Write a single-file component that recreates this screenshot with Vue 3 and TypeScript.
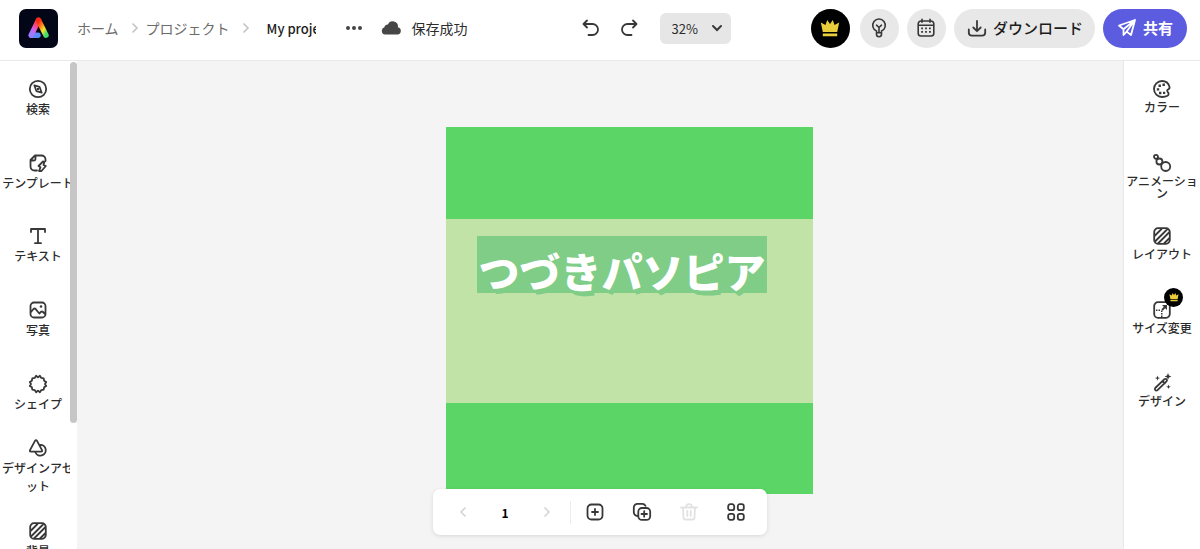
<script setup lang="ts">
import { ref } from 'vue'

interface Icon {
  line?: string
  fill?: string
}
interface Tool {
  label: string
  icon: string
  premium?: boolean
}

const icons: Record<string, Icon> = {
  search: {
    line: 'M10 1.800a8.200 8.200 0 1 0 0 16.400a8.200 8.200 0 1 0 0-16.400M6.300 6.300l5.200 1.500 2.200 5.900-5.200-1.500z',
    fill: 'M9 9h2v2H9z',
  },
  template: {
    line: 'M9 17.500H6.500A4 4 0 0 1 2.500 13.500V7L7 2.500H13.500A4 4 0 0 1 17.500 6.500V8M3 7.500H6a1.500 1.500 0 0 0 1.500-1.500V3M15 8.500l-4.500 4.500 2 1.300-1.500 3.700h2.500l4.300-5-2.300-1 1-3.200z',
  },
  text: { line: 'M3 6V3h14v3M10 3v14M7 17.200h6' },
  photo: {
    line: 'M6 2.500h8A3.500 3.500 0 0 1 17.500 6v8a3.500 3.500 0 0 1-3.500 3.500H6A3.500 3.500 0 0 1 2.500 14V6A3.500 3.500 0 0 1 6 2.500M3 12l2.500-3c.8-.8 1.500-.6 2.200.2l3.600 4.300 1.500-1.500c.8-.7 1.500-.7 2.200 0l2 2',
    fill: 'M13 5.200a1.300 1.300 0 1 0 0 2.600a1.300 1.300 0 1 0 0-2.600',
  },
  shape: {
    line: 'M10 3.400L11.900 1.800 13.300 3.900 15.700 4.300 16.100 6.700 18.200 8.100 17 10 18.200 11.900 16.100 13.300 15.700 15.700 13.300 16.100 11.900 18.200 10 16.600 8.100 18.200 6.700 16.100 4.300 15.700 3.900 13.300 1.800 11.900 3 10 1.800 8.100 3.900 6.700 4.300 4.300 6.700 3.900 8.100 1.800z',
  },
  assets: {
    line: 'M7 2.800L2 12.200q-.7 1.500 1 1.500h10q1.700 0 1-1.500L9 2.800q-1-1.500-2 0zM12 6.800a5.400 5.400 0 1 1-4.800 7',
  },
  hatch: {
    line: 'M6 2.200h8A3.800 3.800 0 0 1 17.800 6v8a3.800 3.800 0 0 1-3.800 3.800H6A3.800 3.800 0 0 1 2.200 14V6A3.800 3.800 0 0 1 6 2.200M3 9.500L9.500 3M3.500 15L15 3.500M6 17.500L17.500 6M12 17.500L17.500 12',
  },
  palette: {
    line: 'M17.400 7.500C16.400 4 13.500 2 10 2a8 8 0 0 0 0 16c2 0 4-.3 5.500-1.200 1.500-1 1.300-2.700.5-3.500-1-1-1.200-2.500.3-3 1-.4 1.500-1.500 1.100-2.800z',
    fill: 'M10.500 4.500h2.400v2.400h-2.400zM6.500 5.500h2.400v2.400H6.500zM4.800 9.200h2.400v2.400H4.800zM7 12.800h2.400v2.400H7zM11 12.800h2.200v2.200H11z',
  },
  motion: {
    line: 'M4 1.800a2 2 0 1 0 0 4a2 2 0 1 0 0-4M7.400 5.500a3 3 0 1 0 0 6a3 3 0 1 0 0-6M13.700 9a4.500 4.500 0 1 0 0 9a4.500 4.500 0 1 0 0-9',
  },
  resize: {
    line: 'M6 2.200h8A3.800 3.800 0 0 1 17.800 6v8a3.800 3.800 0 0 1-3.800 3.800H6A3.800 3.800 0 0 1 2.200 14V6A3.800 3.800 0 0 1 6 2.200M13 7l-2.500 2.500',
    fill: 'M10 5h5v5zM4 9.500h1.500v1.500H4zM6.500 9.500H8v1.500H6.500zM9 10.500h1.500V12H9zM9 13h1.500v1.500H9zM9 15.500h1.500v1.500H9z',
  },
  wand: {
    line: 'M12.200 6.300l-9 8.700q-.8 1 0 2t2.300.2l9-8.800q1-1 .1-2t-2.400-.1zM10.500 8l2.300 2.300',
    fill: 'M16 0l1 2.400 2.400 1-2.400 1L16 6.800l-1-2.400-2.400-1 2.400-1zM5.500 2.500l.7 1.900 1.900.7-1.900.7-.7 1.900-.7-1.900-1.900-.7 1.900-.7zM16.500 11.500l.6 1.700 1.700.6-1.700.6-.6 1.700-.6-1.700-1.700-.6 1.700-.6z',
  },
  undo: { line: 'M6 2.500L2.500 6 6 9.500M3 6h8.500a5.500 5.500 0 0 1 0 11H7.500' },
  redo: { line: 'M14 2.500L17.500 6 14 9.500M17 6H8.500a5.500 5.500 0 0 0 0 11H12.500' },
  bulb: {
    line: 'M7.500 14.800v-1.700A6.300 6.300 0 1 1 12.500 13.100v1.700zM7.500 14.800v1.500a2.500 2.500 0 0 0 5 0v-1.500M10 14V9.500M7.500 7.200L10 9.500l2.500-2.300',
  },
  calendar: {
    line: 'M5 3h10A2.800 2.800 0 0 1 17.800 5.800v9.400a2.800 2.800 0 0 1-2.800 2.800H5A2.800 2.800 0 0 1 2.200 15.200V5.800A2.800 2.800 0 0 1 5 3M2.200 7.300h15.600M6 1.200v3M14 1.200v3',
    fill: 'M5.200 9.500h1.800v1.800H5.200zM9.100 9.500h1.800v1.800H9.100zM13 9.500h1.800v1.800H13zM5.200 13h1.800v1.800H5.200zM9.100 13h1.800v1.800H9.100zM13 13h1.800v1.800H13z',
  },
  download: { line: 'M10 3v10M6.300 9.500L10 13.200l3.700-3.700M1.800 11.500V14.500a3.200 3.200 0 0 0 3.200 3.200h10a3.200 3.200 0 0 0 3.200-3.200v-3' },
  send: { line: 'M18 2L2 7.500l4.500 3.700V17l3.200-3.400L14 17zM18 2L6.500 11.200M18 2L9.700 13.600' },
  add: {
    line: 'M6.500 2.500h7A4 4 0 0 1 17.500 6.500v7a4 4 0 0 1-4 4h-7A4 4 0 0 1 2.500 13.500v-7A4 4 0 0 1 6.500 2.500M10 7v6M7 10h6',
  },
  duplicate: {
    line: 'M10 6h4.500A3.700 3.700 0 0 1 18.200 9.700v4.500a3.700 3.700 0 0 1-3.700 3.700h-4.500A3.700 3.700 0 0 1 6.300 14.200V9.700A3.700 3.700 0 0 1 10 6M12.200 9.200v5.500M9.500 12h5.500M5.500 14A3.700 3.700 0 0 1 1.800 10.300V5.500A3.700 3.700 0 0 1 5.500 1.800H10a3.700 3.700 0 0 1 3.500 2',
  },
  trash: {
    line: 'M2 5.500h16M4 5.500l.5 10A2 2 0 0 0 6.500 17.500h7a2 2 0 0 0 2-2l.5-10M7 5.500c0-4.500 6-4.500 6 0M8.300 9v5M11.700 9v5',
  },
  grid: {
    line: 'M4.200 2.200h2a2 2 0 0 1 2 2v2a2 2 0 0 1-2 2h-2a2 2 0 0 1-2-2v-2a2 2 0 0 1 2-2M13.800 2.200h2a2 2 0 0 1 2 2v2a2 2 0 0 1-2 2h-2a2 2 0 0 1-2-2v-2a2 2 0 0 1 2-2M4.200 11.800h2a2 2 0 0 1 2 2v2a2 2 0 0 1-2 2h-2a2 2 0 0 1-2-2v-2a2 2 0 0 1 2-2M13.800 11.800h2a2 2 0 0 1 2 2v2a2 2 0 0 1-2 2h-2a2 2 0 0 1-2-2v-2a2 2 0 0 1 2-2',
  },
}

const crown = 'M0.800 4.500L5.500 7 7.200 2 10 6 12.800 2 14.500 7 19.200 4.500 17.200 14H2.800zM2.800 15.500h14.400v2.800H2.800z'

const insertTools: Tool[] = [
  { label: '検索', icon: 'search' },
  { label: 'テンプレート', icon: 'template' },
  { label: 'テキスト', icon: 'text' },
  { label: '写真', icon: 'photo' },
  { label: 'シェイプ', icon: 'shape' },
  { label: 'デザインアセット', icon: 'assets' },
  { label: '背景', icon: 'hatch' },
]
const editTools: Tool[] = [
  { label: 'カラー', icon: 'palette' },
  { label: 'アニメーション', icon: 'motion' },
  { label: 'レイアウト', icon: 'hatch' },
  { label: 'サイズ変更', icon: 'resize', premium: true },
  { label: 'デザイン', icon: 'wand' },
]
const pageActions = [
  { label: 'ページを追加', icon: 'add', disabled: false },
  { label: 'ページを複製', icon: 'duplicate', disabled: false },
  { label: 'ページを削除', icon: 'trash', disabled: true },
  { label: 'ページ一覧', icon: 'grid', disabled: false },
]

const projectName = ref('My project')
const zoom = ref('32%')
</script>

<template>
  <div class="app">
    <header class="topbar">
      <a class="logo" href="#" aria-label="ホーム">
        <svg viewBox="0 0 39 39">
          <defs>
            <linearGradient id="left" x1="0.7" y1="0" x2="0.2" y2="1">
              <stop offset="0" stop-color="#ff3b24" />
              <stop offset="0.35" stop-color="#f5488c" />
              <stop offset="0.7" stop-color="#c865f5" />
              <stop offset="1" stop-color="#9c7bff" />
            </linearGradient>
            <linearGradient id="right" x1="0.2" y1="0" x2="0.9" y2="1">
              <stop offset="0" stop-color="#ff2a16" />
              <stop offset="0.35" stop-color="#ff8a1c" />
              <stop offset="0.65" stop-color="#f4e62c" />
              <stop offset="1" stop-color="#45d86b" />
            </linearGradient>
          </defs>
          <rect width="39" height="39" rx="7" fill="#020617" />
          <g fill="none" stroke-width="5.400" stroke-linecap="round" stroke-linejoin="round">
            <path d="M12.500 26.200h6.500" stroke="#5b8cff" />
            <path d="M19.500 11.200L12.200 26.200" stroke="url(#left)" />
            <path d="M19.500 11.200L27 26.200" stroke="url(#right)" />
          </g>
        </svg>
      </a>
      <nav class="crumbs" aria-label="パンくず">
        <a href="#">ホーム</a>
        <svg class="sep" viewBox="0 0 8 12"><path d="M1.500 1.500L6 6l-4.500 4.500" /></svg>
        <a href="#">プロジェクト</a>
        <svg class="sep" viewBox="0 0 8 12"><path d="M1.500 1.500L6 6l-4.500 4.500" /></svg>
      </nav>
      <input v-model="projectName" class="project" type="text" aria-label="プロジェクト名" />
      <button class="more" type="button" aria-label="その他">
        <svg viewBox="0 0 18 6"><path d="M3 1a2 2 0 1 0 0 4a2 2 0 1 0 0-4M9 1a2 2 0 1 0 0 4a2 2 0 1 0 0-4M15 1a2 2 0 1 0 0 4a2 2 0 1 0 0-4" /></svg>
      </button>
      <div class="status">
        <svg viewBox="0 0 20 14"><path d="M4 13.500a3.700 3.700 0 0 1-.6-7.200 3.500 3.500 0 0 1 3.500-2.700 5.200 5.200 0 0 1 10 2.600A3.700 3.700 0 0 1 16.500 13.500z" /></svg>
        <span>保存成功</span>
      </div>
      <div class="history">
        <button v-for="name in ['undo', 'redo']" :key="name" type="button" :aria-label="name">
          <svg class="icon" viewBox="0 0 20 20"><path class="line" :d="icons[name].line" /></svg>
        </button>
        <div class="zoom">
          <select v-model="zoom" aria-label="ズーム"><option>32%</option></select>
          <svg viewBox="0 0 12 8"><path d="M2 2l4 4 4-4" /></svg>
        </div>
      </div>
      <div class="actions">
        <button class="round premium" type="button" aria-label="プレミアム">
          <svg class="icon" viewBox="0 0 20 20"><path class="fill" :d="crown" /></svg>
        </button>
        <button class="round" type="button" aria-label="ヒント">
          <svg class="icon thin" viewBox="0 0 20 20"><path class="line" :d="icons.bulb.line" /></svg>
        </button>
        <button class="round" type="button" aria-label="予定">
          <svg class="icon thin" viewBox="0 0 20 20">
            <path class="line" :d="icons.calendar.line" /><path class="fill" :d="icons.calendar.fill" />
          </svg>
        </button>
        <button class="pill" type="button">
          <svg class="icon" viewBox="0 0 20 20"><path class="line" :d="icons.download.line" /></svg>
          <span>ダウンロード</span>
        </button>
        <button class="pill share" type="button">
          <svg class="icon" viewBox="0 0 20 20"><path class="line" :d="icons.send.line" /></svg>
          <span>共有</span>
        </button>
      </div>
    </header>

    <div class="body">
      <aside class="left">
        <nav class="viewport">
          <ul>
            <li v-for="tool in insertTools" :key="tool.label">
              <button type="button">
                <svg class="icon" viewBox="0 0 20 20">
                  <path class="line" :d="icons[tool.icon].line" />
                  <path v-if="icons[tool.icon].fill" class="fill" :d="icons[tool.icon].fill" />
                </svg>
                <span>{{ tool.label }}</span>
              </button>
            </li>
          </ul>
        </nav>
        <div class="track"><div class="thumb"></div></div>
      </aside>

      <main class="stage">
        <section class="artboard">
          <div class="panel"><h1>つづきパソピア</h1></div>
        </section>
        <div class="pager">
          <button class="step" type="button" disabled aria-label="前のページ">
            <svg viewBox="0 0 8 12"><path d="M6.500 1.500L2 6l4.500 4.500" /></svg>
          </button>
          <span class="page">1</span>
          <button class="step" type="button" disabled aria-label="次のページ">
            <svg viewBox="0 0 8 12"><path d="M1.500 1.500L6 6l-4.500 4.500" /></svg>
          </button>
          <span class="rule"></span>
          <button v-for="a in pageActions" :key="a.icon" class="act" type="button" :disabled="a.disabled" :aria-label="a.label">
            <svg class="icon" viewBox="0 0 20 20"><path class="line" :d="icons[a.icon].line" /></svg>
          </button>
        </div>
      </main>

      <aside class="right">
        <ul>
          <li v-for="tool in editTools" :key="tool.label">
            <button type="button">
              <span class="glyph">
                <svg class="icon" viewBox="0 0 20 20">
                  <path class="line" :d="icons[tool.icon].line" />
                  <path v-if="icons[tool.icon].fill" class="fill" :d="icons[tool.icon].fill" />
                </svg>
                <span v-if="tool.premium" class="badge">
                  <svg viewBox="0 0 20 20"><path :d="crown" /></svg>
                </span>
              </span>
              <span>{{ tool.label }}</span>
            </button>
          </li>
        </ul>
      </aside>
    </div>
  </div>
</template>

<style>
body {
  margin: 0;
}
</style>

<style scoped>
.app {
  display: flex;
  flex-direction: column;
  height: 100vh;
  overflow: hidden;
  background: #f4f4f4;
  color: #2c2c2c;
  font-family: "Noto Sans CJK JP", "Noto Sans", sans-serif;
  font-size: 14px;
}
.app *,
.app {
  box-sizing: border-box;
}
button,
input,
select {
  margin: 0;
  padding: 0;
  border: 0;
  background: none;
  color: inherit;
  font: inherit;
}
ul {
  display: grid;
  margin: 0;
  padding: 0;
  list-style: none;
}
svg {
  display: block;
  flex: none;
}
.icon {
  width: 20px;
  height: 20px;
  color: #383838;
}
.line {
  fill: none;
  stroke: currentColor;
  stroke-width: 1.8;
  stroke-linecap: round;
  stroke-linejoin: round;
}
.thin .line {
  stroke-width: 1.6;
}
.fill {
  fill: currentColor;
}

.topbar {
  display: flex;
  flex: none;
  align-items: center;
  height: 61px;
  padding: 0 13px 4px 19px;
  border-bottom: 1px solid #e9e9e9;
  background: #fff;
}
.logo svg {
  width: 39px;
  height: 39px;
}
.crumbs {
  display: flex;
  align-items: center;
  margin-left: 19px;
}
.crumbs a {
  color: #6b6b6b;
  text-decoration: none;
  white-space: nowrap;
}
.sep {
  width: 8px;
  height: 12px;
  margin: 0 7px 0 12px;
  fill: none;
  stroke: #c4c4c4;
  stroke-width: 1.6;
}
.project {
  width: 49px;
  margin-left: 10px;
  color: #1c1c1c;
  font-size: 13px;
  font-weight: 500;
}
.more {
  margin-left: 29px;
}
.more svg {
  width: 18px;
  height: 6px;
  fill: #444;
}
.status {
  display: flex;
  align-items: center;
  gap: 11px;
  margin-left: 18px;
  white-space: nowrap;
}
.status svg {
  width: 20px;
  height: 14px;
  fill: #464646;
}
.history {
  display: flex;
  align-items: center;
  gap: 18px;
  margin-left: 113px;
}
.zoom {
  display: flex;
  position: relative;
  align-items: center;
  margin-left: 3px;
}
.zoom select {
  width: 71px;
  height: 31px;
  padding-left: 12px;
  border-radius: 6px;
  background: #e6e6e6;
  appearance: none;
  font-size: 13px;
}
.zoom svg {
  position: absolute;
  right: 8px;
  width: 12px;
  height: 8px;
  fill: none;
  stroke: #383838;
  stroke-width: 2;
  stroke-linecap: round;
  pointer-events: none;
}
.actions {
  display: flex;
  gap: 8px;
  margin-left: auto;
}
.round {
  display: grid;
  place-items: center;
  width: 39px;
  height: 39px;
  border-radius: 50%;
  background: #e8e8e8;
}
.premium {
  margin-right: 2px;
  background: #000;
}
.premium .icon {
  color: #e9cd3a;
}
.pill {
  display: flex;
  align-items: center;
  gap: 6px;
  height: 39px;
  padding: 0 12px 0 13px;
  border-radius: 20px;
  background: #e8e8e8;
  color: #1c1c1c;
  font-size: 15px;
  font-weight: 500;
  white-space: nowrap;
}
.pill span {
  padding-bottom: 2px;
}
.share {
  padding: 0 14px;
  background: #5c5ce0;
  color: #fff;
  font-weight: 700;
}
.share .icon {
  color: #fff;
}

.body {
  display: flex;
  flex: 1;
  min-height: 0;
}
.left {
  display: flex;
  flex: none;
  background: #fff;
}
.viewport {
  width: 70px;
  overflow: hidden;
}
.viewport ul {
  width: 76px;
  height: 515px;
  margin-top: 1px;
  grid-template-rows: repeat(7, 1fr);
}
li button {
  display: flex;
  flex-direction: column;
  align-items: center;
  justify-content: center;
  width: 100%;
  height: 100%;
  font-size: 12px;
  font-weight: 500;
  line-height: 18px;
}
.viewport li span {
  width: 74px;
  padding-top: 1px;
  word-break: break-all;
}
.track {
  width: 7px;
}
.thumb {
  height: 74%;
  margin-top: 1px;
  border-radius: 4px;
  background: #c6c6c6;
}
.stage {
  display: flex;
  flex: 1;
  position: relative;
  justify-content: center;
  padding: 66px 0 0 59px;
}
.artboard {
  display: flex;
  flex-direction: column;
  justify-content: center;
  width: 367px;
  height: 367px;
  background: #5bd566;
}
.panel {
  height: 184px;
  padding: 17px 46px 0 31px;
  background: #c2e3a8;
}
h1 {
  height: 57px;
  margin: 0;
  background: #80cd87;
  color: #fff;
  font-size: 41px;
  font-weight: 900;
  line-height: 68px;
  text-align: center;
  text-shadow: 3px 5px 0 #80cd87;
  white-space: nowrap;
}
.pager {
  display: flex;
  position: absolute;
  bottom: 14px;
  left: 50%;
  align-items: center;
  height: 46px;
  padding: 0 8px 0 9px;
  border-radius: 7px;
  background: #fff;
  box-shadow: 0 1px 4px rgba(0, 0, 0, 0.12);
  transform: translateX(-50%);
}
.step,
.page,
.act {
  display: grid;
  place-items: center;
  width: 42px;
  height: 46px;
}
.step svg {
  width: 8px;
  height: 12px;
  fill: none;
  stroke: #d4d4d4;
  stroke-width: 1.6;
}
.page {
  color: #000;
  font-size: 12px;
  font-weight: 700;
}
.rule {
  width: 1px;
  height: 23px;
  margin: 0 0 0 2px;
  background: #ececec;
}
.act {
  width: 47px;
}
.act:disabled .icon {
  color: #e2e2e2;
}
.right {
  flex: none;
  width: 77px;
  border-left: 1px solid #e9e9e9;
  background: #fff;
}
.right ul {
  height: 368px;
  margin-top: 18px;
  grid-template-rows: repeat(5, 1fr);
}
.right li button {
  justify-content: flex-start;
  line-height: 12px;
}
.right li button > span:last-child {
  width: 72px;
  margin-top: 2px;
  word-break: break-all;
}
.glyph {
  position: relative;
}
.badge {
  display: grid;
  position: absolute;
  top: -12px;
  left: 12px;
  place-items: center;
  width: 19px;
  height: 19px;
  border-radius: 50%;
  background: #000;
}
.badge svg {
  width: 10px;
  height: 10px;
  fill: #e9cd3a;
}
</style>
